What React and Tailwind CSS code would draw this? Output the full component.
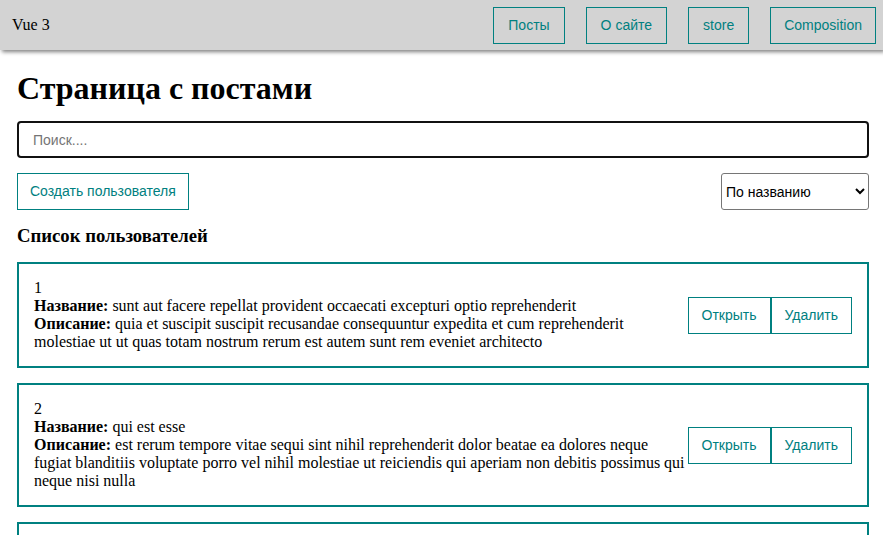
import React, { useState } from 'react';

const posts = [
  {
    id: 1,
    title: 'sunt aut facere repellat provident occaecati excepturi optio reprehenderit',
    body: 'quia et suscipit suscipit recusandae consequuntur expedita et cum reprehenderit molestiae ut ut quas totam nostrum rerum est autem sunt rem eveniet architecto',
  },
  {
    id: 2,
    title: 'qui est esse',
    body: 'est rerum tempore vitae sequi sint nihil reprehenderit dolor beatae ea dolores neque fugiat blanditiis voluptate porro vel nihil molestiae ut reiciendis qui aperiam non debitis possimus qui neque nisi nulla',
  },
  {
    id: 3,
    title: 'ea molestias quasi exercitationem repellat qui ipsa sit aut',
    body: 'et iusto sed quo iure voluptatem occaecati omnis eligendi aut ad voluptatem doloribus vel accusantium quis pariatur molestiae porro eius odio et labore et velit aut',
  },
];

const sans = "font-['Liberation_Sans',Arial,sans-serif]";
const btnBase = `${sans} text-[14px] leading-[15px] text-[#008080] border border-[#008080] py-[10px] bg-transparent`;
const btn = `${btnBase} px-[14px]`;
const cardBtn = `${btnBase} px-[13px]`;

function NavBar() {
  return (
    <div className="h-[50px] bg-[#d3d3d3] shadow-[2px_2px_4px_gray] flex items-center justify-between pl-[12px] pr-[7px] relative z-10">
      <div>Vue 3</div>
      <div className="flex gap-[21px]">
        <button className={btn}>Посты</button>
        <button className={btn}>О сайте</button>
        <button className={btn}>store</button>
        <button className={`${btnBase} px-[13px]`}>Composition</button>
      </div>
    </div>
  );
}

function PostItem({ post }) {
  return (
    <div className="border-2 border-[#008080] p-[15px] mt-[15px] flex items-center justify-between">
      <div>
        <div>{post.id}</div>
        <div><strong>Название:</strong> {post.title}</div>
        <div><strong>Описание:</strong> {post.body}</div>
      </div>
      <div className="flex shrink-0">
        <button className={cardBtn}>Открыть</button>
        <button className={cardBtn}>Удалить</button>
      </div>
    </div>
  );
}

export default function App() {
  const [search, setSearch] = useState('');
  const [sort, setSort] = useState('title');

  return (
    <div className="min-h-screen bg-white text-black font-['Liberation_Serif','Times_New_Roman',serif] text-[16px] leading-[normal]">
      <NavBar />
      <div className="pl-[17px] pr-[14px] pt-[20px]">
        <h1 className="text-[32px] font-bold leading-[normal]">Страница с постами</h1>
        <input
          value={search}
          onChange={(e) => setSearch(e.target.value)}
          placeholder="Поиск...."
          className={`${sans} block w-full mt-[14px] h-[37px] border-2 border-[#111] rounded-[4px] px-[14px] text-[14px] placeholder:text-[#757575] outline-none`}
        />
        <div className="flex justify-between items-center mt-[15px]">
          <button className={`${btnBase} px-[12px]`}>Создать пользователя</button>
          <select
            value={sort}
            onChange={(e) => setSort(e.target.value)}
            className={`${sans} w-[148px] h-[37px] border border-[#767676] rounded-[3px] text-[14px] pl-0 bg-white text-black`}
          >
            <option value="title">По названию</option>
            <option value="body">По описанию</option>
          </select>
        </div>
        <h3 className="text-[18.72px] font-bold leading-[normal] mt-[15px]">Список пользователей</h3>
        <div>
          {posts.map((p) => (
            <PostItem key={p.id} post={p} />
          ))}
        </div>
      </div>
    </div>
  );
}
